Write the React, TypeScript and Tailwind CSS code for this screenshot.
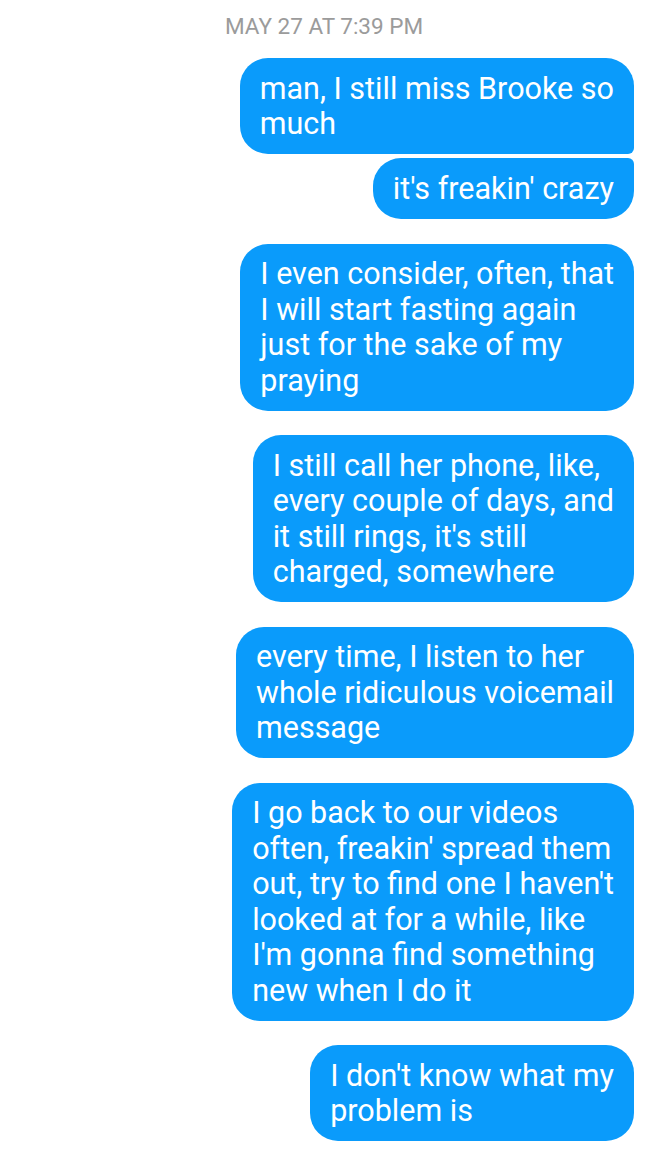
import React from 'react';

type Msg = { lines: string[]; corners: string; gap: string };

const messages: Msg[] = [
  { lines: ['man, I still miss Brooke so', 'much'], corners: 'rounded-[28px] rounded-br-[6px]', gap: 'mt-0' },
  { lines: ["it's freakin' crazy"], corners: 'rounded-[28px] rounded-tr-[6px]', gap: 'mt-[4px]' },
  {
    lines: ['I even consider, often, that', 'I will start fasting again', 'just for the sake of my', 'praying'],
    corners: 'rounded-[28px]',
    gap: 'mt-[25px]',
  },
  {
    lines: ['I still call her phone, like,', 'every couple of days, and', "it still rings, it's still", 'charged, somewhere'],
    corners: 'rounded-[28px]',
    gap: 'mt-[24.5px]',
  },
  {
    lines: ['every time, I listen to her', 'whole ridiculous voicemail', 'message'],
    corners: 'rounded-[28px]',
    gap: 'mt-[24.5px]',
  },
  {
    lines: [
      'I go back to our videos',
      "often, freakin' spread them",
      "out, try to find one I haven't",
      'looked at for a while, like',
      "I'm gonna find something",
      'new when I do it',
    ],
    corners: 'rounded-[28px]',
    gap: 'mt-[24.5px]',
  },
  { lines: ["I don't know what my", 'problem is'], corners: 'rounded-[28px]', gap: 'mt-[24.5px]' },
];

export default function App() {
  return (
    <div
      className="w-[648px] h-[1159px] bg-white overflow-hidden"
      style={{ fontFamily: 'Roboto, "Noto Sans", sans-serif' }}
    >
      <div className="pt-[13px] text-center text-[22.5px] leading-[26px] text-[#9b9b9b]">MAY 27 AT 7:39 PM</div>
      <div className="flex flex-col items-end pr-[14px] mt-[19px]">
        {messages.map((m, i) => (
          <div
            key={i}
            className={`${m.gap} ${m.corners} bg-[#0a9bfb] text-white text-[30.5px] leading-[35.5px] px-[20px] py-[12.5px] whitespace-nowrap`}
          >
            {m.lines.map((l, j) => (
              <div key={j}>{l}</div>
            ))}
          </div>
        ))}
      </div>
    </div>
  );
}
